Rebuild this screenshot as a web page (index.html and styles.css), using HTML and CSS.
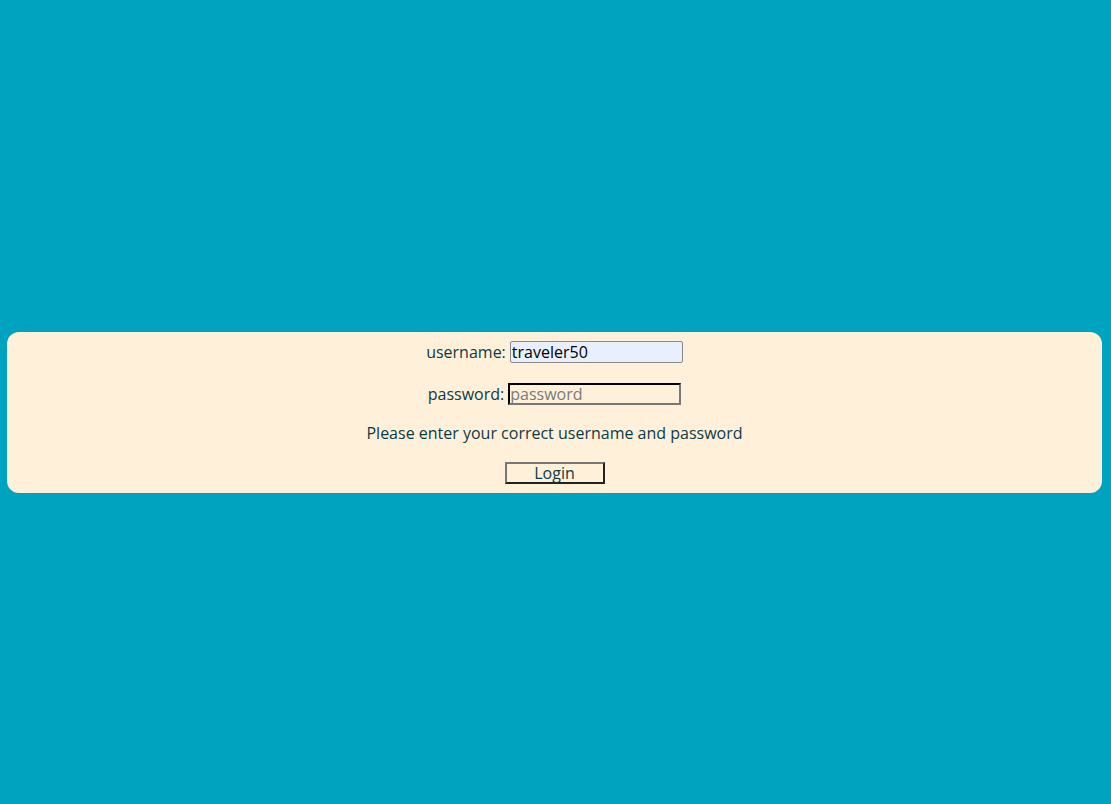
FILE: index.html
```html
<!DOCTYPE html>
<html>
<head>
<meta charset="utf-8">
<link rel="stylesheet" href="styles.css">
</head>
<body>
<div class="panel">
  <div class="row row-user">
    <label class="lbl" for="u">username:</label>
    <input id="u" class="inp inp-user" type="text" value="traveler50">
  </div>
  <div class="row row-pass">
    <label class="lbl" for="p">password:</label>
    <input id="p" class="inp inp-pass" type="password" placeholder="password">
  </div>
  <div class="msg">Please enter your correct username and password</div>
  <div class="row row-btn">
    <button class="btn" type="button">Login</button>
  </div>
</div>
</body>
</html>
```
FILE: styles.css
```css
html, body {
  margin: 0;
  padding: 0;
  background: #00a3bf;
  height: 100%;
}
body {
  padding-top: 332px;
  box-sizing: border-box;
  font-family: "Open Sans", "Noto Sans", sans-serif;
  font-size: 16px;
  color: #0a3b47;
}
.panel {
  margin: 0 9px 0 7px;
  background: #fff1d9;
  border-radius: 12px;
  padding: 9px 0 9px;
  display: flex;
  flex-direction: column;
  align-items: center;
}
.row {
  display: flex;
  align-items: center;
  height: 22px;
}
.row-pass {
  margin-top: 20px;
}
.lbl {
  margin-right: 4px;
  line-height: 22px;
}
.inp {
  font-family: "Open Sans", "Noto Sans", sans-serif;
  font-size: 16px;
  box-sizing: border-box;
  width: 173px;
  height: 22px;
  margin: 0;
  padding: 0 1px;
  outline: none;
}
.inp-user {
  background: #e8f0fe;
  border: 1px solid #8a8a8a;
  border-radius: 2px;
  color: #000;
}
.inp-pass {
  background: transparent;
  border: 2px inset #777;
  border-top-color: #222;
  border-left-color: #222;
  border-right-color: #777;
  border-bottom-color: #777;
  padding: 0;
}
.inp-pass::placeholder {
  color: #7a7a7a;
}
.msg {
  margin-top: 17px;
  line-height: 22px;
  height: 22px;
}
.row-btn {
  margin-top: 18px;
}
.btn {
  font-family: "Open Sans", "Noto Sans", sans-serif;
  font-size: 16px;
  color: #0a3b47;
  box-sizing: border-box;
  width: 100px;
  height: 22px;
  margin: 0;
  padding: 0;
  line-height: 18px;
  background: transparent;
  border: 2px solid;
  border-color: #777 #222 #222 #777;
}
```
